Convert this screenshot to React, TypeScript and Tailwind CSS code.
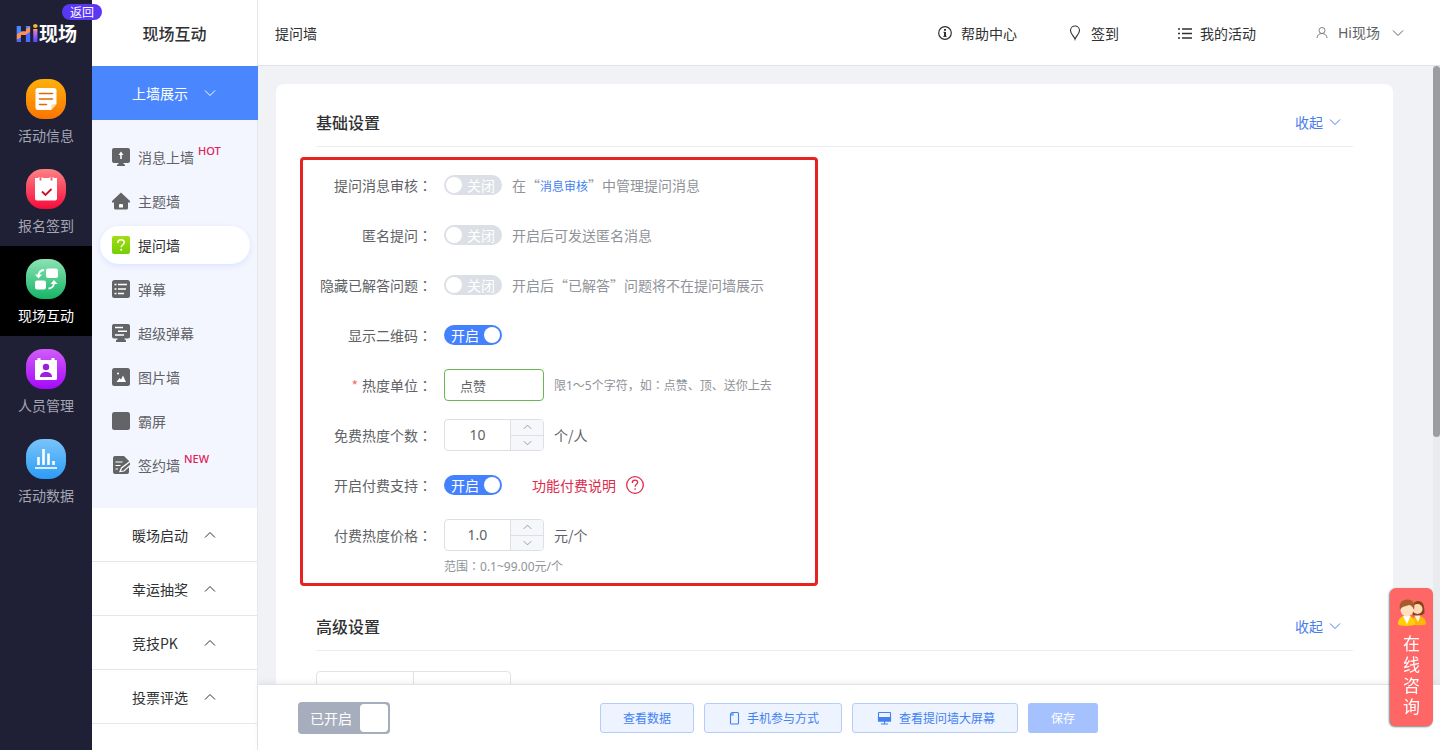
import React, { useState } from "react";
import clsx from "clsx";

/* ---------- small line icons ---------- */

function Chevron({ up, className = "h-2 w-3" }: { up?: boolean; className?: string }) {
  return (
    <svg viewBox="0 0 12 8" fill="none" stroke="currentColor" className={clsx("shrink-0", className)}>
      <path d={up ? "M1 6.5l5-5 5 5" : "M1 1.5l5 5 5-5"} />
    </svg>
  );
}

function InfoIcon() {
  return (
    <svg viewBox="0 0 14 14" className="h-3.5 w-3.5" fill="none" stroke="currentColor">
      <circle cx="7" cy="7" r="6.3" strokeWidth="1.2" />
      <path d="M7 3v1.8" strokeWidth="2" />
      <path d="M7 6v4.6" strokeWidth="2" />
      <path d="M5.5 6.3H7M5.3 10.4h3.4" />
    </svg>
  );
}

function PinIcon() {
  return (
    <svg viewBox="0 0 16 16" className="h-4 w-4" fill="none" stroke="currentColor" strokeWidth="1.1">
      <path d="M9 14.2C8.1 11.2 4.5 9 4.5 5.5a4.5 4.5 0 0 1 9 0C13.500 9 9.900 11.200 9 14.200z" />
    </svg>
  );
}

function ListIcon() {
  return (
    <svg viewBox="0 0 16 16" className="h-4 w-4" fill="none" stroke="currentColor" strokeWidth="1.7">
      <path d="M5 4h10M5 8.5h10M5 13h10M1 4h2M1 8.5h2M1 13h2" />
    </svg>
  );
}

function UserIcon() {
  return (
    <svg viewBox="0 0 16 16" className="h-4 w-4 text-[#7d8085]" fill="none" stroke="currentColor">
      <circle cx="8" cy="5.5" r="3" />
      <path d="M3 13c.3-2.800 2-4.500 5-4.500s4.700 1.700 5 4.500" />
    </svg>
  );
}

function QuestionIcon() {
  return (
    <svg viewBox="0 0 18 18" className="h-[18px] w-[18px]" fill="none" stroke="currentColor">
      <circle cx="9" cy="9" r="8.3" strokeWidth="1.3" />
      <path d="M6.3 7c0-1.700 1.100-2.800 2.700-2.800s2.700 1 2.700 2.400c0 1.700-2.600 1.900-2.600 4.200" strokeWidth="1.3" />
      <circle cx="9.1" cy="13" r=".5" fill="currentColor" strokeWidth=".6" />
    </svg>
  );
}

/* ---------- round icons of the main nav ---------- */

function RoundIcon({ id, from, to, children }: { id: string; from: string; to: string; children: React.ReactNode }) {
  return (
    <svg viewBox="0 0 40 40" className="h-10 w-10 shrink-0">
      <defs>
        <linearGradient id={id} x1="0" y1="0" x2="0" y2="1">
          <stop offset="0" stopColor={from} />
          <stop offset="1" stopColor={to} />
        </linearGradient>
      </defs>
      <rect width="40" height="40" rx="17" fill={`url(#${id})`} />
      {children}
    </svg>
  );
}

const mainNav = [
  {
    label: "活动信息",
    icon: (
      <RoundIcon id="nav-info" from="#fdb00b" to="#fb7503">
        <path d="M12 9h16a2.500 2.500 0 0 1 2.500 2.500V25L25 31H12a2.500 2.500 0 0 1-2.500-2.500v-17A2.500 2.500 0 0 1 12 9z" fill="#fff" />
        <path d="M25 31v-3.500a2.500 2.500 0 0 1 2.500-2.500h3z" fill="#ffdfae" />
        <path d="M13.5 14.5h13M13.5 20h13M13.5 25.5h7" stroke="#d96a05" strokeWidth="1.5" strokeLinecap="round" />
      </RoundIcon>
    ),
  },
  {
    label: "报名签到",
    icon: (
      <RoundIcon id="nav-sign" from="#fd8285" to="#f70b3b">
        <path d="M9 9h4v3h3V9h8v3h3V9h4v20.500a2 2 0 0 1-2 2H11a2 2 0 0 1-2-2z" fill="#fff" />
        <path d="M13 8v4h3V8M24 8v4h3V8" stroke="#fff" fill="none" />
        <path d="M16 22.5l3.500 3.500 6-6" fill="none" stroke="#c4122f" strokeWidth="1.8" />
      </RoundIcon>
    ),
  },
  {
    label: "现场互动",
    active: true,
    icon: (
      <RoundIcon id="nav-live" from="#8be3b4" to="#17b566">
        <rect x="20" y="9.5" width="12" height="9.5" rx="2" fill="#fff" />
        <rect x="9" y="21.5" width="11" height="9" rx="2" fill="#fff" />
        <path d="M18 11c-4 .3-5.500 2.500-5.500 6M22.500 29.500c4-.3 5.500-2.500 5.500-6" fill="none" stroke="#fff" strokeWidth="1.8" />
        <path d="M9 15.500h7l-3.500 4zM24.500 25h7L28 21z" fill="#fff" />
      </RoundIcon>
    ),
  },
  {
    label: "人员管理",
    icon: (
      <RoundIcon id="nav-people" from="#d15cf8" to="#a40afa">
        <path d="M9 11h2.500V9h3v2h11V9h3v2H31v18.500a1.500 1.500 0 0 1-1.500 1.500h-19A1.500 1.500 0 0 1 9 29.500z" fill="#fff" />
        <circle cx="20" cy="18" r="3.2" fill="#9a1fe0" />
        <path d="M14 28c0-3.500 2.500-5 6-5s6 1.500 6 5z" fill="#9a1fe0" />
      </RoundIcon>
    ),
  },
  {
    label: "活动数据",
    icon: (
      <RoundIcon id="nav-data" from="#7ac4f9" to="#2b9cf7">
        <path d="M12.5 26v-8M17.5 26V10M22.5 26V14.5M27.5 26v-4" stroke="#fff" strokeWidth="2.6" />
        <path d="M9 29h22" stroke="#fff" strokeWidth="1.6" />
      </RoundIcon>
    ),
  },
];

/* ---------- square icons of the sub menu ---------- */

function MenuSvg({ children }: { children: React.ReactNode }) {
  return (
    <svg viewBox="0 0 18 18" className="h-[18px] w-[18px] shrink-0 text-[#636467]" fill="currentColor">
      {children}
    </svg>
  );
}

const wallMenu: { label: string; tag?: string; active?: boolean; icon: React.ReactNode }[] = [
  {
    label: "消息上墙",
    tag: "HOT",
    icon: (
      <MenuSvg>
        <path d="M2 0h14a2 2 0 0 1 2 2v11a2 2 0 0 1-2 2h-5l2 2v1H5v-1l2-2H2a2 2 0 0 1-2-2V2a2 2 0 0 1 2-2z" />
        <path d="M9 3.500 6.500 7h1.700v4h1.600V7h1.700z" fill="#fff" />
      </MenuSvg>
    ),
  },
  {
    label: "主题墙",
    icon: (
      <MenuSvg>
        <path d="M9 .5 18 9v1.500h-2V16a1.500 1.500 0 0 1-1.500 1.500h-11A1.500 1.500 0 0 1 2 16v-5.500H0V9z" />
        <path d="M7 15.500V13a1 1 0 0 1 1-1h2a1 1 0 0 1 1 1v2.500z" fill="#fff" />
      </MenuSvg>
    ),
  },
  {
    label: "提问墙",
    active: true,
    icon: (
      <svg viewBox="0 0 18 18" className="h-[18px] w-[18px] shrink-0">
        <defs>
          <linearGradient id="ask-bg" x1="0" y1="0" x2="0" y2="1">
            <stop offset="0" stopColor="#a5dc12" />
            <stop offset="1" stopColor="#74cf03" />
          </linearGradient>
        </defs>
        <rect width="18" height="18" rx="2" fill="url(#ask-bg)" />
        <path d="M5.700 7c0-2 1.300-3.200 3.300-3.200s3.300 1.100 3.300 2.800c0 2.100-3.100 2.200-3.100 4.700" fill="none" stroke="#fff" strokeWidth="1.5" />
        <circle cx="9.2" cy="13.8" r="1" fill="#fff" />
      </svg>
    ),
  },
  {
    label: "弹幕",
    icon: (
      <MenuSvg>
        <rect width="18" height="18" rx="2.5" />
        <path d="M2.5 4.5h2M6 4.5h9M2.5 9h2M6 9h8M2.5 13.5h2M6 13.5h6" stroke="#fff" strokeWidth="1.4" />
      </MenuSvg>
    ),
  },
  {
    label: "超级弹幕",
    icon: (
      <MenuSvg>
        <path d="M2 0h14a2 2 0 0 1 2 2v10.500a2 2 0 0 1-2 2h-4l2 2V18H4v-1.500l2-2H2a2 2 0 0 1-2-2V2a2 2 0 0 1 2-2z" />
        <path d="M3 3.500h8M6 7.300h9M3 11h9" stroke="#fff" strokeWidth="1.4" />
      </MenuSvg>
    ),
  },
  {
    label: "图片墙",
    icon: (
      <MenuSvg>
        <rect width="18" height="18" rx="2.5" />
        <path d="M4.500 14l3-4 1.500 1.500L11 7.500l3 6.500z" fill="#fff" />
        <circle cx="6" cy="5.5" r="1" fill="#fff" />
      </MenuSvg>
    ),
  },
  {
    label: "霸屏",
    icon: (
      <MenuSvg>
        <rect width="18" height="18" rx="2.5" />
      </MenuSvg>
    ),
  },
  {
    label: "签约墙",
    tag: "NEW",
    icon: (
      <MenuSvg>
        <path d="M3 0h9l5 5v11a2 2 0 0 1-2 2H3a2 2 0 0 1-2-2V2a2 2 0 0 1 2-2z" />
        <path d="M3.500 6h7M3.500 9.500h5M3.500 13h2.500" stroke="#fff" strokeWidth="1.2" />
        <path d="M18 5.500 9.500 12l-1.500 3.500 4-.5 6-5.500" fill="#636467" stroke="#fff" strokeWidth="1.2" />
      </MenuSvg>
    ),
  },
];

const otherGroups = ["暖场启动", "幸运抽奖", "竞技PK", "投票评选"];

/* ---------- form pieces ---------- */

// the JP face centres the full-width colon in its cell
function Colon() {
  return <span className="font-['Noto_Sans_CJK_JP',sans-serif]">：</span>;
}

function Toggle({ id, on }: { id: string; on?: boolean }) {
  const [checked, setChecked] = useState(!!on);
  return (
    <label
      className={clsx(
        "flex h-5 w-[58px] shrink-0 cursor-pointer items-center justify-between rounded-full px-0.5 leading-5 whitespace-nowrap text-white",
        checked ? "flex-row-reverse bg-[#4381ff]" : "bg-[#dcdfe6]"
      )}
    >
      <input
        id={id}
        type="checkbox"
        role="switch"
        className="sr-only"
        checked={checked}
        onChange={(e) => setChecked(e.target.checked)}
      />
      <span className="h-4 w-4 shrink-0 rounded-full bg-white" />
      <span className="px-[5px]">{checked ? "开启" : "关闭"}</span>
    </label>
  );
}

function Stepper({ id, initial, step, digits }: { id: string; initial: number; step: number; digits: number }) {
  const [value, setValue] = useState(initial.toFixed(digits));
  const bump = (n: number) => setValue((v) => Math.max(step, Number(v) + n).toFixed(digits));

  return (
    <div className="flex h-8 w-[100px] overflow-hidden rounded border border-[#dcdfe6]">
      <input
        id={id}
        value={value}
        onChange={(e) => setValue(e.target.value)}
        className="w-full min-w-0 text-center font-['Noto_Sans'] text-sm text-[#606266] outline-none"
      />
      <div className="flex w-[33px] shrink-0 flex-col divide-y divide-[#dcdfe6] border-l border-[#dcdfe6] bg-[#f5f7fa] text-[#7d8085]">
        <button type="button" aria-label="增加" className="flex flex-1 items-center justify-center" onClick={() => bump(step)}>
          <Chevron up className="h-1.5 w-[9px]" />
        </button>
        <button type="button" aria-label="减少" className="flex flex-1 items-center justify-center" onClick={() => bump(-step)}>
          <Chevron className="h-1.5 w-[9px]" />
        </button>
      </div>
    </div>
  );
}

function Row({ label, htmlFor, required, children }: { label: string; htmlFor: string; required?: boolean; children: React.ReactNode }) {
  return (
    <div className="flex h-[50px] items-center">
      <label htmlFor={htmlFor} className="mr-3 w-[129px] shrink-0 text-right text-[#606266]">
        {required && <span className="mr-1 text-[#f56c6c]">*</span>}
        {label}
        <Colon />
      </label>
      {children}
    </div>
  );
}

function SectionHead({ title }: { title: string }) {
  return (
    <div className="flex h-[63px] items-center justify-between border-b border-[#ebedf0] pt-3.5 pr-3">
      <h2 className="text-base leading-6 font-medium text-[#303133]">{title}</h2>
      <button type="button" className="flex items-center gap-1.5 text-[#4a7cf0]">
        收起
        <Chevron />
      </button>
    </div>
  );
}

function PhoneIcon() {
  return (
    <svg viewBox="0 0 14 14" className="h-3.5 w-3.5" fill="none" stroke="currentColor" strokeWidth="1.1">
      <path d="M5 1.500h5.500a1 1 0 0 1 1 1V12a1 1 0 0 1-1 1h-6a1 1 0 0 1-1-1V3z" />
      <path d="M3.500 4H6V1.500" />
    </svg>
  );
}

function MonitorIcon() {
  return (
    <svg viewBox="0 0 18 14" className="h-3.5 w-[18px]" fill="none" stroke="currentColor" strokeWidth="1.1">
      <rect x="3.5" y="1.5" width="12" height="8.5" rx=".5" />
      <path d="M3.5 6.500h12V10h-12z" fill="currentColor" />
      <path d="M9.5 10v2.500M6 13h7" />
    </svg>
  );
}

function OutlineButton({ children }: { children: React.ReactNode }) {
  return (
    <button
      type="button"
      className="flex h-[30px] items-center gap-1.5 rounded-[3px] border border-[#b3ccfa] bg-[#edf3ff] px-[22px] text-xs text-[#4381f0]"
    >
      {children}
    </button>
  );
}

function AgentsIcon({ className }: { className?: string }) {
  return (
    <svg viewBox="0 0 30 30" className={className}>
      {/* back figure */}
      <path d="M15 26c0-5 2-8 6-8 4.500 0 8 3 8 8 0 1.500-12 2-14 0z" fill="#fbb80b" />
      <path d="M16 17c-1-9 0-14 5-14s6.500 4 6.500 12c-2 3-9 4-11.500 2z" fill="#8a4319" />
      <circle cx="20.5" cy="11" r="5" fill="#ffd9b5" />
      <path d="M17.500 17.500h6L21 24z" fill="#fff3e6" />
      {/* front figure */}
      <path d="M1 26c0-5 3.500-8.500 8.500-8.500S18 21 18 26c0 2.500-17 2.500-17 0z" fill="#ffcf08" />
      <path d="M6 18h7.500L10 26z" fill="#fff" />
      <circle cx="10" cy="12" r="6.5" fill="#ffe0c0" />
      <path d="M3 12C1.500 5 5 1.500 10.500 1.500S18.500 6 17 12c-1-3-2.500-4.500-5-5C9 8.500 5 8 3 12z" fill="#a85c2a" />
    </svg>
  );
}

/* ---------- page ---------- */

export default function App() {
  return (
    <div className="flex h-screen overflow-hidden bg-[#f0f2f5] font-['Noto_Sans_CJK_SC','Microsoft_YaHei',sans-serif] text-sm leading-5 text-[#303133]">
      {/* main nav */}
      <aside className="w-[92px] shrink-0 bg-[#1f2035]">
        <div className="relative flex h-[66px] items-center justify-center">
          <a href="#" className="flex items-center text-[19px] leading-6 font-bold text-white">
            <span className="flex font-['Noto_Sans'] text-[22px] leading-6 font-black text-transparent">
              <span className="bg-[linear-gradient(150deg,#4a86ff_42%,#fa8f5f_43%,#fa8f5f_58%,#4a6dff_59%)] bg-clip-text">H</span>
              <span className="bg-[linear-gradient(180deg,#fbb52c_38%,#e07ad0_40%,#5b4dff_80%)] bg-clip-text">i</span>
            </span>
            现场
          </a>
          <a
            href="#"
            className="absolute top-1 left-[62px] z-10 flex h-4 w-10 items-center justify-center rounded-full bg-[#5a36f5] text-xs leading-4 text-white"
          >
            返回
          </a>
        </div>
        <nav>
          {mainNav.map((item) => (
            <a
              key={item.label}
              href="#"
              className={clsx(
                "flex h-[90px] flex-col items-center gap-2 pt-[13px] leading-4",
                item.active ? "bg-black text-white" : "text-[#a4a6b3]"
              )}
            >
              {item.icon}
              {item.label}
            </a>
          ))}
        </nav>
      </aside>

      {/* sub menu */}
      <aside className="w-[166px] shrink-0 border-r border-[#e4e7ed] bg-white">
        <h1 className="flex h-[66px] items-center justify-center text-base font-medium">现场互动</h1>
        <button type="button" className="-mr-px flex h-[54px] w-[166px] items-center gap-4 bg-[#4a87ff] pl-10 text-white">
          上墙展示
          <Chevron />
        </button>
        <nav className="flex flex-col gap-1.5 bg-[#f4f6ff] pt-[18px] pr-[7px] pb-6 pl-2">
          {wallMenu.map((item) => (
            <a
              key={item.label}
              href="#"
              className={clsx(
                "flex h-[38px] items-center gap-2 rounded-full pl-3",
                item.active ? "bg-white text-[#303133] shadow-[0_2px_6px_rgba(74,135,255,0.15)]" : "text-[#606266]"
              )}
            >
              {item.icon}
              <span className="flex">
                {item.label}
                {item.tag && (
                  <sup className="top-0 ml-1 font-['Noto_Sans'] text-[11px] leading-2 font-medium text-[#e0205a]">{item.tag}</sup>
                )}
              </span>
            </a>
          ))}
        </nav>
        {otherGroups.map((name) => (
          <button
            key={name}
            type="button"
            className="flex h-[54px] w-full items-center gap-4 border-b border-[#e4e7ed] pl-10 text-left"
          >
            <span className="min-w-14">{name}</span>
            <Chevron up />
          </button>
        ))}
      </aside>

      <div className="flex min-w-0 flex-1 flex-col">
        <header className="flex h-[66px] shrink-0 items-center justify-between border-b border-[#dfe2e6] bg-white pr-9 pl-[17px]">
          <span>提问墙</span>
          <nav className="flex items-center gap-[49px]">
            <a href="#" className="flex items-center gap-[9px]">
              <InfoIcon />
              帮助中心
            </a>
            <a href="#" className="flex items-center gap-[9px]">
              <PinIcon />
              签到
            </a>
            <a href="#" className="flex items-center gap-[7px] pl-[9px]">
              <ListIcon />
              我的活动
            </a>
            <button type="button" className="flex items-center gap-2 pl-[9px] text-[#606266]">
              <UserIcon />
              <span className="font-['Noto_Sans','Noto_Sans_CJK_SC',sans-serif]">Hi现场</span>
              <span className="pl-1">
                <Chevron />
              </span>
            </button>
          </nav>
        </header>

        <main className="relative min-h-0 flex-1 overflow-hidden pt-[18px] pr-[47px] pl-[18px]">
          <section className="rounded-lg bg-white px-10 pb-10">
            <SectionHead title="基础设置" />

            <form className="mt-2.5 -ml-4 max-w-[518px] rounded border-3 border-[#e6231e]">
              <Row label="提问消息审核" htmlFor="audit">
                <Toggle id="audit" />
                <span className="ml-2.5 text-[#909399]">
                  在“
                  <a href="#" className="text-xs text-[#4381f0]">
                    消息审核
                  </a>
                  ”中管理提问消息
                </span>
              </Row>
              <Row label="匿名提问" htmlFor="anonymous">
                <Toggle id="anonymous" />
                <span className="ml-2.5 text-[#909399]">开启后可发送匿名消息</span>
              </Row>
              <Row label="隐藏已解答问题" htmlFor="hide-solved">
                <Toggle id="hide-solved" />
                <span className="ml-2.5 text-[#909399]">开启后“已解答”问题将不在提问墙展示</span>
              </Row>
              <Row label="显示二维码" htmlFor="qrcode">
                <Toggle id="qrcode" on />
              </Row>
              <Row label="热度单位" htmlFor="heat-unit" required>
                <input
                  id="heat-unit"
                  defaultValue="点赞"
                  className="h-8 w-[100px] rounded border border-[#67b755] px-[15px] text-[13px] text-[#606266] outline-none"
                />
                <span className="ml-2.5 font-['Noto_Sans','Noto_Sans_CJK_SC',sans-serif] text-xs text-[#909399]">
                  限1～5个字符，如
                  <Colon />
                  点赞、顶、送你上去
                </span>
              </Row>
              <Row label="免费热度个数" htmlFor="free-heat">
                <Stepper id="free-heat" initial={10} step={1} digits={0} />
                <span className="ml-2.5 text-[#606266]">个/人</span>
              </Row>
              <Row label="开启付费支持" htmlFor="pay-support">
                <Toggle id="pay-support" on />
                <a href="#" className="ml-[30px] flex items-center gap-2.5 text-[#dc2b4c]">
                  功能付费说明
                  <QuestionIcon />
                </a>
              </Row>
              <Row label="付费热度价格" htmlFor="pay-price">
                <Stepper id="pay-price" initial={1} step={0.1} digits={1} />
                <span className="ml-2.5 text-[#606266]">元/个</span>
              </Row>
              <p className="pb-2.5 pl-[141px] font-['Noto_Sans','Noto_Sans_CJK_SC',sans-serif] text-xs leading-3 text-[#909399]">
                范围
                <Colon />
                0.1~99.00元/个
              </p>
            </form>

            <div className="mt-0.5">
              <SectionHead title="高级设置" />
            </div>
            <div className="mt-5 flex h-10 w-[195px] divide-x divide-[#dfe2e8] rounded border border-[#dfe2e8]">
              <div className="flex-1" />
              <div className="flex-1" />
            </div>
          </section>

          {/* scrollbar */}
          <div className="absolute inset-y-0 right-0 w-[7px] bg-[#e9ebee]">
            <div className="h-3/5 rounded-full bg-[#9b9da0]" />
          </div>
        </main>

        <footer className="relative grid h-[66px] shrink-0 grid-cols-[1fr_auto_1fr] items-center border-t border-[#e0e3e8] bg-white px-10 shadow-[0_-2px_6px_rgba(0,0,0,0.06)]">
          <button
            type="button"
            role="switch"
            aria-checked="true"
            className="mr-auto flex h-8 w-[92px] items-center justify-between rounded bg-[#a6adbc] pr-0.5 pl-3 text-white"
          >
            已开启
            <span className="h-7 w-7 rounded bg-white" />
          </button>
          <div className="flex gap-2.5">
            <OutlineButton>查看数据</OutlineButton>
            <OutlineButton>
              <PhoneIcon />
              手机参与方式
            </OutlineButton>
            <OutlineButton>
              <MonitorIcon />
              查看提问墙大屏幕
            </OutlineButton>
            <button type="button" className="h-[30px] rounded-[3px] bg-[#a5c2ff] px-[23px] text-xs text-white">
              保存
            </button>
          </div>
        </footer>
      </div>

      {/* online service */}
      <a
        href="#"
        className="fixed right-[7px] bottom-6 flex w-[43px] flex-col items-center rounded-md bg-[#ff6666] py-2.5 text-center text-[17px] leading-[21px] text-white shadow-[-1px_1px_2px_rgba(0,0,0,0.5)]"
      >
        <AgentsIcon className="mb-1 h-[30px] w-[30px]" />
        <span className="w-[17px]">在线咨询</span>
      </a>
    </div>
  );
}
